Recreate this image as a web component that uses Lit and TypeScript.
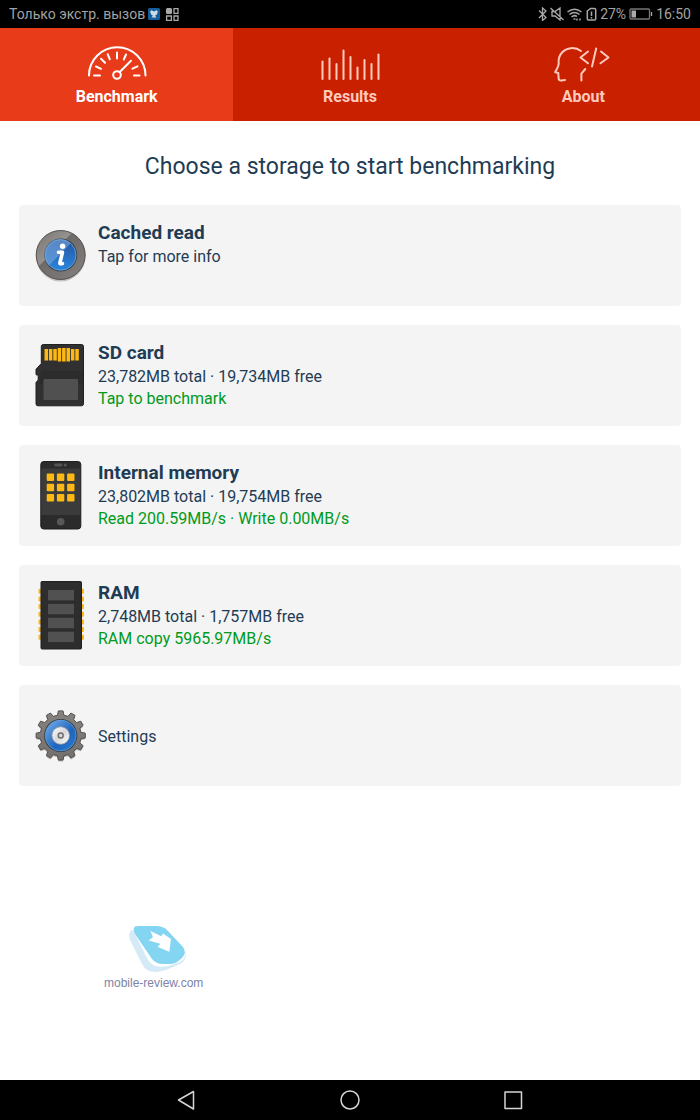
import { LitElement, html, svg, css } from "lit";
import { customElement, state } from "lit/decorators.js";

const gaugeIcon = html`<svg class="tab-icon" viewBox="84 44 64 38" aria-hidden="true">
  <path d="M88 75.5a28.2 28.2 0 0 1 56.5 0" />
  <circle cx="116" cy="75" r="3.8" />
  <path d="M118.7 72L130 60.8M93 75.5h6M133 75.5h5.5M95 66.5l5 2.3M131.5 68.7l5-2.4M100 58.7l4 4M106.8 54.3l2 5M116 52.5v6M125 54.5l-2.2 5" />
</svg>`;

const range = (n: number) => Array.from({ length: n }, (_, i) => i);

const barTops = [61.5, 58.5, 64, 50.5, 57, 67.5, 60, 64, 54.5];
const barsIcon = html`<svg class="tab-icon" viewBox="318 44 64 38" aria-hidden="true">
  ${barTops.map((top, i) => svg`<path d=${`M${322.5 + i * 7} 79V${top}`} />`)}
</svg>`;

const aboutIcon = html`<svg class="tab-icon" viewBox="551 44 64 38" aria-hidden="true">
  <path d="M581 51C575 46.5 566.5 47.5 562 52.5C558.8 56 558.3 60 558.7 63.5C558.7 67 556.5 69 555.2 72.2L558.3 73L558.7 79.2Q559 80.7 561.5 80.5L565 80" />
  <path d="M585.3 69L581.4 73.7V80.5M588 51.5L580.5 57.5L588 63.3M596.2 48.5L592 66.5M601 51.5L608.5 57.5L600.5 63.3" />
</svg>`;

const infoIcon = html`<svg class="storage-icon" viewBox="28 219 64 72" aria-hidden="true">
  <defs>
    <linearGradient id="rim" x1="0" y1="0" x2="1" y2="1">
      <stop offset="0" stop-color="#777370" /><stop offset=".38" stop-color="#96928f" />
      <stop offset=".4" stop-color="#6e6a68" /><stop offset="1" stop-color="#858180" />
    </linearGradient>
    <linearGradient id="blue" x1="0" y1="0" x2="0" y2="1">
      <stop offset="0" stop-color="#2453a0" /><stop offset="1" stop-color="#2a86dc" />
    </linearGradient>
  </defs>
  <circle cx="60.7" cy="257" r="24.5" fill="#000" opacity=".2" />
  <circle cx="60.7" cy="255" r="24.5" fill="url(#rim)" stroke="#55504e" />
  <circle cx="60.7" cy="255" r="16.5" fill="#39414b" />
  <circle cx="60.7" cy="255" r="15.3" fill="url(#blue)" stroke="#6db7ec" stroke-width=".7" />
  <path d="M49 265.5A15.3 15.3 0 0 1 70.5 243.5Z" fill="#79a9df" opacity=".6" />
  <circle cx="62.6" cy="246.3" r="2.7" fill="#fff" />
  <path d="M58.5 252.3h4l-2.6 10.5q-.3 1.5 2.5 .8" fill="none" stroke="#fff" stroke-width="3.6" stroke-linejoin="round" stroke-linecap="round" />
</svg>`;

const sdIcon = html`<svg class="storage-icon" viewBox="28 339 64 72" aria-hidden="true">
  <path d="M43.3 344.5H81.5Q83.5 344.5 83.5 346.5V403.8Q83.5 405.8 81.5 405.8H38Q36 405.8 36 403.8V382.5L38.2 380V375H36.7Q36 375 36 374V369.3L41.3 363.5V346.5Q41.3 344.5 43.3 344.5Z" fill="#303030" stroke="#202020" />
  <path d="M41.8 371H83V384H38Z" fill="#272727" opacity=".4" />
  ${range(8).map(
    (i) => svg`<rect x=${44.5 + i * 4.4} y=${i > 2 && i < 6 ? 348 : 349} width="3.5" height=${i > 2 && i < 6 ? 13.5 : 11.5} fill="#fdb813" />`
  )}
  <rect x="43.5" y="379" width="34.5" height="21" rx="1" fill="#505050" />
</svg>`;

const phoneIcon = html`<svg class="storage-icon" viewBox="28 459 64 72" aria-hidden="true">
  <rect x="40.8" y="461.5" width="40" height="67.5" rx="3" fill="#2b2b2b" stroke="#1d1d1d" />
  <rect x="41.3" y="468.5" width="39" height="46.5" fill="#3b3b3b" />
  <rect x="54.3" y="463.5" width="8" height="3" rx="1" fill="#555" />
  <circle cx="65.2" cy="465" r="1.6" fill="#555" />
  ${range(9).map(
    (i) => svg`<rect x=${46.7 + (i % 3) * 10.2} y=${473.6 + Math.floor(i / 3) * 10.2} width="7.4" height="7.4" rx="1" fill="#fdb813" />`
  )}
  <circle cx="60.7" cy="521.7" r="3.8" fill="#585858" />
</svg>`;

const ramIcon = html`<svg class="storage-icon" viewBox="28 579 64 72" aria-hidden="true">
  ${range(7).map(
    (i) => svg`<rect x="38.5" y=${588.8 + i * 7.65} width="45.5" height="5" rx="1" fill="#fdb813" />`
  )}
  <rect x="41" y="581.5" width="40.5" height="67.5" rx="1" fill="#2d2d2d" stroke="#202020" />
  ${range(4).map(
    (i) => svg`<rect x="48" y=${590 + i * 13.9} width="26" height="10.4" fill="#515151" />`
  )}
</svg>`;

// Twelve tapered teeth around the hub.
const gearPath = (() => {
  const pts: string[] = [];
  for (let i = 0; i < 12; i++) {
    for (const [r, off] of [[20.5, -9], [24.7, -5.5], [24.7, 5.5], [20.5, 9]]) {
      const a = ((i * 30 + off - 90) * Math.PI) / 180;
      pts.push(`${(60.7 + r * Math.cos(a)).toFixed(2)} ${(735.5 + r * Math.sin(a)).toFixed(2)}`);
    }
  }
  return `M${pts.join("L")}Z`;
})();

const gearIcon = html`<svg class="storage-icon" viewBox="28 699 64 72" aria-hidden="true">
  <defs>
    <linearGradient id="metal" x1="0" y1="0" x2="0" y2="1">
      <stop offset="0" stop-color="#858280" /><stop offset="1" stop-color="#73706e" />
    </linearGradient>
    <linearGradient id="ring" x1="0" y1="0" x2="1" y2="1">
      <stop offset=".2" stop-color="#5c96db" /><stop offset=".6" stop-color="#1e64bc" />
      <stop offset="1" stop-color="#2c7ed4" />
    </linearGradient>
    <linearGradient id="disc" x1="0" y1="0" x2="1" y2="1">
      <stop offset="0" stop-color="#fff" /><stop offset=".5" stop-color="#d8d8d8" />
      <stop offset="1" stop-color="#fff" />
    </linearGradient>
  </defs>
  <path d=${gearPath} transform="translate(0 1.5)" fill="#000" opacity=".25" />
  <path d=${gearPath} fill="url(#metal)" stroke="#56514e" stroke-linejoin="round" />
  <circle cx="60.7" cy="735.5" r="16.6" fill="#353d47" />
  <circle cx="60.7" cy="735.5" r="15.4" fill="url(#ring)" stroke="#64b3ee" stroke-width=".6" />
  <circle cx="60.7" cy="735.5" r="8.8" fill="url(#disc)" stroke="#8b98a8" stroke-width=".8" />
  <circle cx="60.7" cy="735.5" r="2.5" fill="#d8d8d8" stroke="#6d6d6d" stroke-width="1.4" />
</svg>`;

const tabs = [
  { label: "Benchmark", icon: gaugeIcon },
  { label: "Results", icon: barsIcon },
  { label: "About", icon: aboutIcon },
];

const storages = [
  { icon: infoIcon, title: "Cached read", detail: "Tap for more info", status: "" },
  { icon: sdIcon, title: "SD card", detail: "23,782MB total · 19,734MB free", status: "Tap to benchmark" },
  { icon: phoneIcon, title: "Internal memory", detail: "23,802MB total · 19,754MB free", status: "Read 200.59MB/s · Write 0.00MB/s" },
  { icon: ramIcon, title: "RAM", detail: "2,748MB total · 1,757MB free", status: "RAM copy 5965.97MB/s" },
];

@customElement("app-root")
export class AppRoot extends LitElement {
  @state() private active = 0;

  static styles = css`
    :host {
      display: flex;
      flex-direction: column;
      min-height: 100vh;
      background: #fff;
      color: #1f3c55;
      font-family: Roboto, sans-serif;
    }
    * { box-sizing: border-box; }
    button {
      margin: 0;
      border: 0;
      font: inherit;
      color: inherit;
      cursor: pointer;
    }
    .status-bar {
      display: flex;
      align-items: center;
      justify-content: space-between;
      height: 28px;
      padding: 0 9px;
      background: #000;
      color: #a3a3a3;
      font-size: 14px;
      line-height: 28px;
    }
    .status-group { display: flex; align-items: center; gap: 3px; }
    .glyph { display: block; height: 14px; fill: none; stroke: #a8a8a8; stroke-width: 1.3; }
    .tabs { display: grid; grid-template-columns: repeat(3, 1fr); background: #c92000; }
    .tab {
      display: flex;
      flex-direction: column;
      align-items: center;
      gap: 4px;
      padding: 16px 0 14px;
      background: #c92000;
      color: #ffcabd;
      font-size: 16px;
      font-weight: 700;
      line-height: 21px;
    }
    .tab.active { background: #e83b19; color: #fff; }
    .tab-icon {
      width: 64px;
      height: 38px;
      fill: none;
      stroke: currentColor;
      stroke-width: 2;
      stroke-linecap: round;
      stroke-linejoin: round;
    }
    .content { display: flex; flex: 1; flex-direction: column; padding: 31px 19px 88px; }
    .heading {
      margin: 0 0 23px;
      font-size: 23px;
      font-weight: 400;
      line-height: 30px;
      text-align: center;
    }
    .cards { display: grid; gap: 19px; }
    .card {
      display: flex;
      align-items: flex-start;
      gap: 6px;
      min-height: 101px;
      padding: 14px 9px 13px;
      border-radius: 4px;
      background: #f4f4f4;
      text-align: left;
      font-size: 16px;
      line-height: 22px;
    }
    .storage-icon { flex: none; width: 64px; height: 72px; }
    .card-text { display: flex; flex-direction: column; min-height: 74px; padding-top: 1px; }
    .card-text.single { justify-content: center; }
    .card-title { font-size: 19px; font-weight: 700; line-height: 26px; }
    .card-status { color: #009a1c; }
    .watermark { display: flex; flex-direction: column; align-items: center; align-self: flex-start; margin: auto 0 0 85px; color: #8083a5; }
    .watermark-logo { width: 64px; height: 50px; }
    .watermark-name { font: 12px/18px "Liberation Sans", sans-serif; }
    .nav-bar { display: flex; justify-content: center; gap: 123px; height: 40px; background: #000; }
    .nav-button { display: grid; place-items: center; width: 40px; padding: 0; background: none; }
    .nav-icon { width: 24px; height: 24px; fill: none; stroke: #d5d5d5; stroke-width: 1.5; stroke-linejoin: round; }
  `;

  render() {
    return html`
      <header class="status-bar">
        <div class="status-group">
          <span>Только экстр. вызов</span>
          <svg class="glyph" width="32" height="14" viewBox="149 7 32 14" aria-hidden="true">
            <rect x="149" y="8" width="12" height="12" rx="1.5" fill="#155d9c" stroke="none" />
            <path d="M155 11.5L152.5 10.2Q151 10.5 151.3 12.5Q152 15 154 15.5L152.5 17.5H157.5L156 15.5Q158 15 158.7 12.5Q159 10.5 157.5 10.2Z" fill="#cfdbe5" stroke="none" />
            <rect x="167.6" y="8.6" width="4.8" height="4.8" rx="1" fill="#a8a8a8" />
            <path d="M175 8.6h4v4.8h-4ZM167.6 16h4.8v4.3h-4.8ZM175 16h4v4.3h-4Z" />
          </svg>
        </div>
        <div class="status-group">
          <svg class="glyph" width="59" height="14" viewBox="539 7 59 14" aria-hidden="true">
            <path d="M540 10.5l7 7-3.5 3V8l3.5 3-7 7" />
            <path d="M553 11.5h3l5-3.5v12l-5-4h-3ZM551.5 8l13 12" />
            <path d="M568.5 12q7-5.5 14 0M570.5 14.5q5-4 10 0M572.5 17q3-2.5 5.5-.5M574.5 19h2M578 18.5v2M581 18.5v2" stroke-width="1.5" />
            <path d="M591.5 8.5h4q1.2 0 1.2 1v9.5q0 1-1.2 1h-6q-1.2 0-1.2-1v-8ZM592.5 11.5v4.5M592.5 17v1.5" stroke-width="1.5" />
          </svg>
          <span>27%</span>
          <svg class="glyph" width="24" height="14" viewBox="629 7 24 14" aria-hidden="true">
            <rect x="630" y="9" width="19.5" height="10" rx="1" stroke="#777" />
            <rect x="631.5" y="10.5" width="4.5" height="7" fill="#aaa" stroke="none" />
            <path d="M651.5 12v4" />
          </svg>
          <span>16:50</span>
        </div>
      </header>
      <nav class="tabs" aria-label="Sections">
        ${tabs.map(
          (tab, i) => html`<button
            class=${i === this.active ? "tab active" : "tab"}
            @click=${() => (this.active = i)}
          >${tab.icon}<span>${tab.label}</span></button>`
        )}
      </nav>
      <main class="content">
        <h1 class="heading">Choose a storage to start benchmarking</h1>
        <div class="cards">
          ${storages.map(
            (s) => html`<button class="card">
              ${s.icon}
              <span class="card-text">
                <span class="card-title">${s.title}</span>
                <span>${s.detail}</span>
                ${s.status ? html`<span class="card-status">${s.status}</span>` : ""}
              </span>
            </button>`
          )}
          <button class="card">${gearIcon}<span class="card-text single"><span>Settings</span></span></button>
        </div>
        <div class="watermark">
          <svg class="watermark-logo" viewBox="122 924 64 50" overflow="visible" aria-hidden="true">
            <path d="M131 930Q128 934 130 940L142 964Q146 972 155 972Q160 972 166 970L180 964Q187 960 186 952Z" fill="#d5eaf7" />
            <path d="M132 928L146 956Q151 967 160 967L168 966L180 962Q187 958 185 950Z" fill="#fff" />
            <path d="M138 926H156Q163 926 167 930L183 947Q187 953 182 958L177 962Q174 964 168 964H163Q156 964 152 959L135 934Q131 926 138 926Z" fill="#84d5f2" />
            <path d="M150.3 931L161.3 936.3L163 933.5L171 939L169.3 951.7L157.7 947L160.3 943.8L148.7 940.5L153 937Z" fill="#fff" />
          </svg>
          <span class="watermark-name">mobile-review.com</span>
        </div>
      </main>
      <footer class="nav-bar">
        <button class="nav-button" aria-label="Back">
          <svg class="nav-icon" viewBox="0 0 24 24"><path d="M3.5 12L18.5 3.5V21Z" /></svg>
        </button>
        <button class="nav-button" aria-label="Home">
          <svg class="nav-icon" viewBox="0 0 24 24"><circle cx="12" cy="12" r="9" /></svg>
        </button>
        <button class="nav-button" aria-label="Recent apps">
          <svg class="nav-icon" viewBox="0 0 24 24"><rect x="4" y="4" width="16.5" height="16.5" /></svg>
        </button>
      </footer>
    `;
  }
}
